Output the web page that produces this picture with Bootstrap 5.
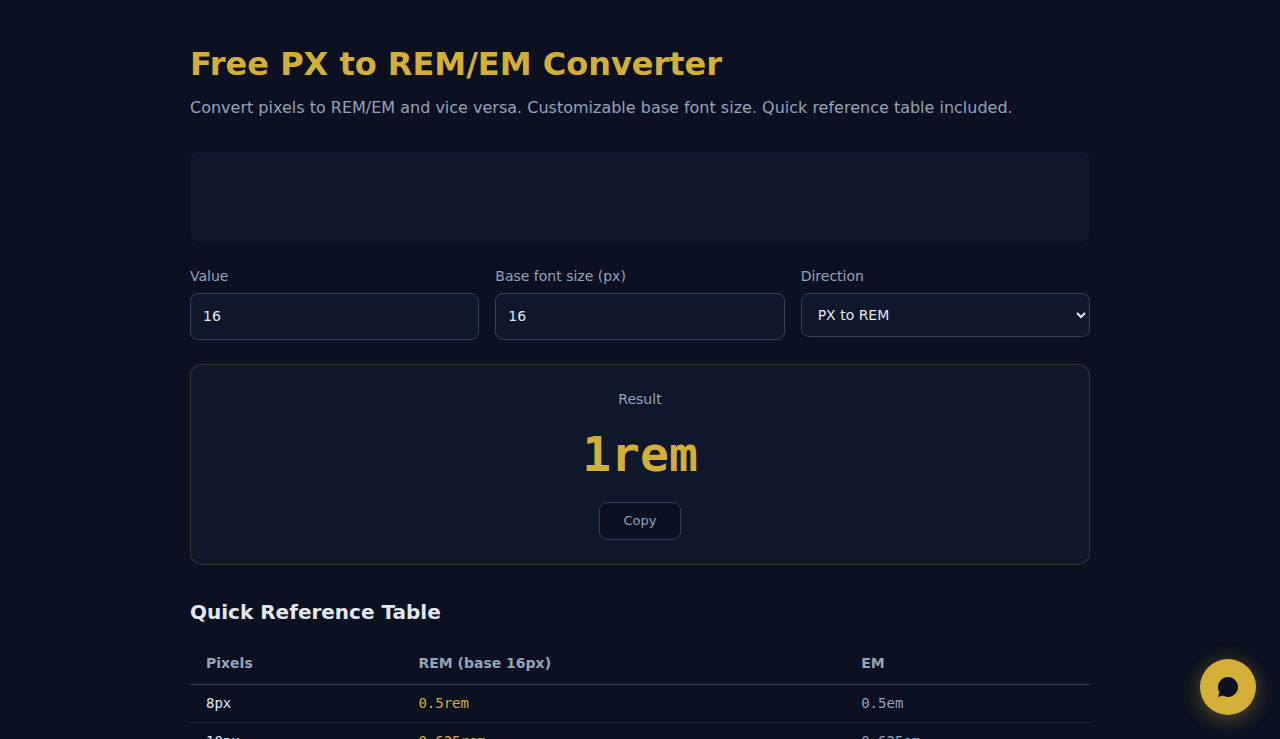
<!DOCTYPE html>
<html lang="en" data-bs-theme="dark">
<head>
<meta charset="utf-8">
<meta name="viewport" content="width=device-width, initial-scale=1">
<title>Free PX to REM/EM Converter</title>
<link href="https://cdn.jsdelivr.net/npm/bootstrap@5.3.0/dist/css/bootstrap.min.css" rel="stylesheet">
<style>
  :root { --page: #0b1120; --panel: #0f172a; --line: #334155; --gold: #d4af37; --muted: #94a3b8; --ink: #e2e8f0; }
  body { background: var(--page); color: var(--ink); font-family: "DejaVu Sans", sans-serif; }
  .tool-page { max-width: 932px; padding: 40px 16px; }
  .tool-title { font-size: 32px; line-height: 48px; color: var(--gold); }
  .section-title { font-size: 20px; line-height: 30px; color: var(--ink); }
  .muted { color: var(--muted); }
  .gold { color: var(--gold); }
  .fs-14 { font-size: 14px; line-height: 21px; }
  .ad-slot { min-height: 90px; background: var(--panel); border-radius: 8px; }
  .field-label { margin-bottom: 6px; }
  .field { display: block; width: 100%; padding: 12px; font-size: 14px; line-height: 21px; color: var(--ink); background: var(--panel); border: 1px solid var(--line); border-radius: 8px; }
  select.field { height: 44px; }
  .result-card { background: var(--panel); border: 1px solid rgba(212, 175, 55, .2); border-radius: 12px; }
  .mono { font-family: "DejaVu Sans Mono", monospace; }
  .result-value { font-size: 48px; line-height: 72px; margin-bottom: 12px; }
  .copy-btn { --bs-btn-padding-x: 24px; --bs-btn-padding-y: 8px; --bs-btn-font-size: 13px; --bs-btn-line-height: 20px; --bs-btn-border-radius: 8px; --bs-btn-color: var(--muted); --bs-btn-bg: var(--page); --bs-btn-border-color: var(--line); --bs-btn-hover-color: var(--ink); --bs-btn-hover-border-color: var(--gold); }
  .ref-table { --bs-table-bg: transparent; }
  .ref-table th { padding: 10px 16px; color: var(--muted); border-bottom: 1px solid var(--line); }
  .ref-table td { padding: 8px 16px; border-bottom: 1px solid #1e293b; }
  .ref-table td.muted { color: var(--muted); }
  .ref-table td.gold { color: var(--gold); }
  .ref-table td:first-child { color: var(--ink); }
  .col-px { width: 23.6%; } .col-rem { width: 49.2%; }
  .chat-btn { right: 24px; bottom: 24px; width: 56px; height: 56px; border: 0; background: var(--gold); color: var(--page); box-shadow: 0 4px 20px rgba(212, 175, 55, .4); }
</style>
</head>
<body>
<main class="tool-page container-fluid mx-auto">
  <h1 class="tool-title fw-bold mb-2">Free PX to REM/EM Converter</h1>
  <p class="muted mb-0 pb-2">Convert pixels to REM/EM and vice versa. Customizable base font size. Quick reference table included.</p>
  <div class="ad-slot mt-4 mb-4"></div>

  <form class="row gx-3 mb-4">
    <div class="col-4">
      <label class="field-label d-block fs-14 muted" for="value">Value</label>
      <input class="field" id="value" type="text" inputmode="decimal" value="16">
    </div>
    <div class="col-4">
      <label class="field-label d-block fs-14 muted" for="base">Base font size (px)</label>
      <input class="field" id="base" type="text" inputmode="decimal" value="16">
    </div>
    <div class="col-4">
      <label class="field-label d-block fs-14 muted" for="direction">Direction</label>
      <select class="field" id="direction">
        <option>PX to REM</option>
        <option>REM to PX</option>
      </select>
    </div>
  </form>

  <section class="result-card p-4 text-center">
    <div class="fs-14 muted mb-2">Result</div>
    <div class="result-value mono gold fw-bold">1rem</div>
    <button class="btn copy-btn" type="button">Copy</button>
  </section>

  <h2 class="section-title fw-bold mb-3 pt-2 mt-4">Quick Reference Table</h2>
  <table class="table ref-table fs-14 mb-0">
    <colgroup><col class="col-px"><col class="col-rem"><col></colgroup>
    <thead>
      <tr><th scope="col">Pixels</th><th scope="col">REM (base 16px)</th><th scope="col">EM</th></tr>
    </thead>
    <tbody class="mono">
      <tr><td>8px</td><td class="gold">0.5rem</td><td class="muted">0.5em</td></tr>
      <tr><td>10px</td><td class="gold">0.625rem</td><td class="muted">0.625em</td></tr>
    </tbody>
  </table>
</main>

<button class="chat-btn position-fixed rounded-circle d-flex align-items-center justify-content-center p-0" type="button" aria-label="Open chat">
  <svg width="24" height="24" viewBox="0 0 24 24" fill="currentColor" aria-hidden="true"><path d="M12 2C6.48 2 2 6.48 2 12c0 1.85.5 3.58 1.38 5.07L2 22l4.93-1.38A9.96 9.96 0 0 0 12 22c5.52 0 10-4.48 10-10S17.52 2 12 2z"/></svg>
</button>
<script src="https://cdn.jsdelivr.net/npm/bootstrap@5.3.0/dist/js/bootstrap.bundle.min.js"></script>
</body>
</html>
